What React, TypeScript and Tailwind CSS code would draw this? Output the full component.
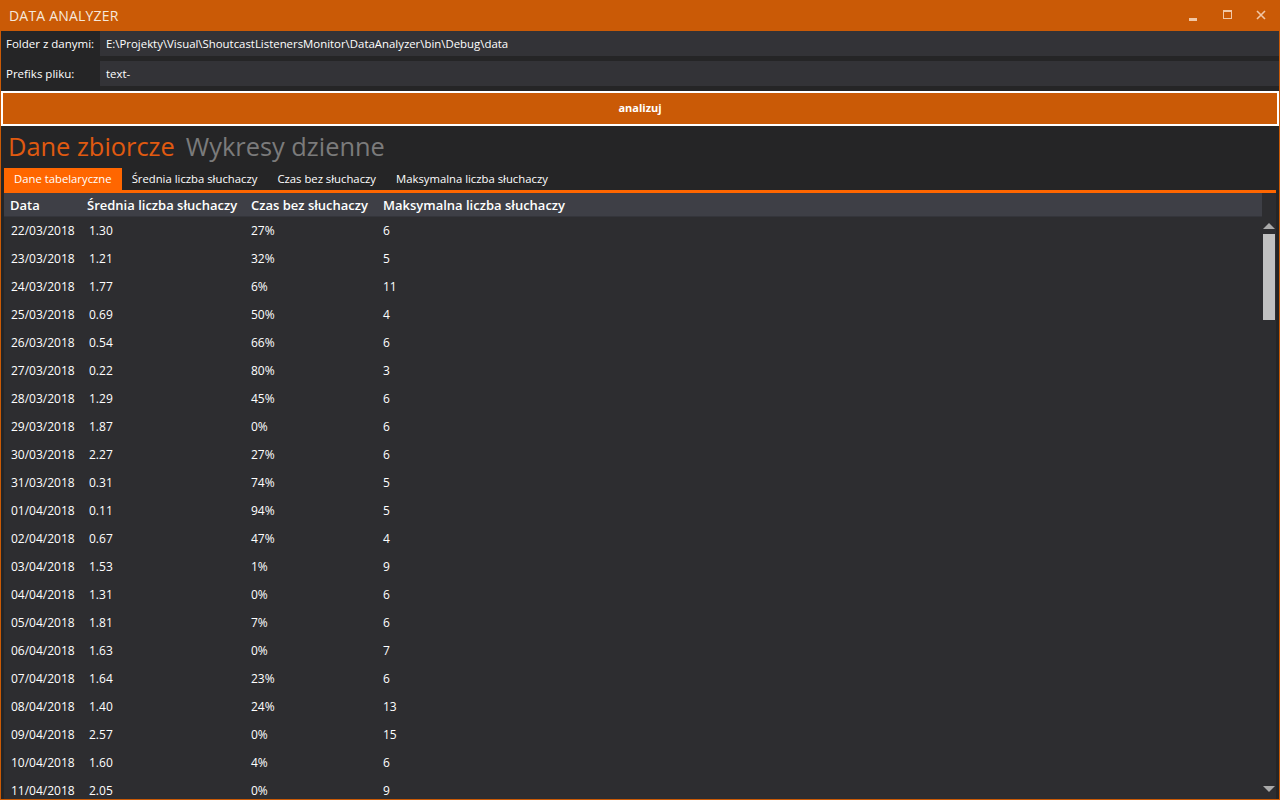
import React from "react";

const rows: [string, string, string, string][] = [
  ["22/03/2018", "1.30", "27%", "6"],
  ["23/03/2018", "1.21", "32%", "5"],
  ["24/03/2018", "1.77", "6%", "11"],
  ["25/03/2018", "0.69", "50%", "4"],
  ["26/03/2018", "0.54", "66%", "6"],
  ["27/03/2018", "0.22", "80%", "3"],
  ["28/03/2018", "1.29", "45%", "6"],
  ["29/03/2018", "1.87", "0%", "6"],
  ["30/03/2018", "2.27", "27%", "6"],
  ["31/03/2018", "0.31", "74%", "5"],
  ["01/04/2018", "0.11", "94%", "5"],
  ["02/04/2018", "0.67", "47%", "4"],
  ["03/04/2018", "1.53", "1%", "9"],
  ["04/04/2018", "1.31", "0%", "6"],
  ["05/04/2018", "1.81", "7%", "6"],
  ["06/04/2018", "1.63", "0%", "7"],
  ["07/04/2018", "1.64", "23%", "6"],
  ["08/04/2018", "1.40", "24%", "13"],
  ["09/04/2018", "2.57", "0%", "15"],
  ["10/04/2018", "1.60", "4%", "6"],
  ["11/04/2018", "2.05", "0%", "9"],
];

const tabs = ["Dane tabelaryczne", "Średnia liczba słuchaczy", "Czas bez słuchaczy", "Maksymalna liczba słuchaczy"];

function TitleBar() {
  return (
    <div className="h-[31px] shrink-0 bg-[#ca5a06] flex items-center pl-[8px] text-[#f6e8dc]">
      <span className="text-[14px] tracking-[0.2px]">DATA ANALYZER</span>
      <div className="ml-auto flex items-center h-full text-[#f1c7a6]">
        {/* minimize */}
        <div className="w-[34px] h-full flex items-center justify-center">
          <div className="w-[8px] h-[3px] bg-[#f1c7a6] mt-[8px]" />
        </div>
        {/* maximize */}
        <div className="w-[34px] h-full flex items-center justify-center">
          <div className="w-[9px] h-[9px] border border-[#f1c7a6] border-t-[2px] mb-[2px]" />
        </div>
        {/* close */}
        <div className="w-[34px] h-full flex items-center justify-center mr-[1px]">
          <svg width="10" height="10" viewBox="0 0 10 10" className="mb-[2px]">
            <path d="M1 1L9 9M9 1L1 9" stroke="#f1c7a6" strokeWidth="1.6" />
          </svg>
        </div>
      </div>
    </div>
  );
}

function Field({ label, value }: { label: string; value: string }) {
  return (
    <div className="h-[25px] flex">
      <div className="w-[99px] pl-[5px] flex items-center text-[11.5px] text-white">{label}</div>
      <div className="flex-1 bg-[#333337] flex items-center pl-[6px] text-[11.4px] text-white">{value}</div>
    </div>
  );
}

export default function App() {
  return (
    <div
      className="w-[1280px] h-[800px] flex flex-col bg-[#252526] border-x border-b border-[#ca5a06] overflow-hidden"
      style={{ fontFamily: '"Open Sans", "Noto Sans", sans-serif' }}
    >
      <TitleBar />
      <div className="flex flex-col gap-[5px]">
        <Field label="Folder z danymi:" value="E:\Projekty\Visual\ShoutcastListenersMonitor\DataAnalyzer\bin\Debug\data" />
        <Field label="Prefiks pliku:" value="text-" />
        <div className="h-[35px] border-2 border-white bg-[#ca5a06] flex items-center justify-center text-[11px] font-bold text-white">
          analizuj
        </div>
      </div>

      <div className="h-[42px] flex items-center pl-[7px] gap-[11px] text-[25.4px] leading-none">
        <span className="text-[#e05a10]">Dane zbiorcze</span>
        <span className="text-[#7b7b7b]">Wykresy dzienne</span>
      </div>

      <div className="flex-1 flex flex-col mx-[3px] min-h-0">
        <div className="h-[22px] flex shrink-0">
          {tabs.map((t, i) => (
            <div
              key={t}
              className={
                i === 0
                  ? "px-[10px] flex items-center text-[11.3px] text-white bg-[#ff6600]"
                  : "px-[10px] flex items-center text-[11.3px] text-white"
              }
            >
              {t}
            </div>
          ))}
        </div>
        <div className="h-[3px] bg-[#ff6600] shrink-0" />
        <div className="flex-1 flex bg-[#2d2d30] min-h-0 overflow-hidden">
          <div className="flex-1 flex flex-col">
            <div className="h-[24px] shrink-0 flex items-center pt-[3px] bg-[#3e3f46] border-b border-[#34353b] text-[13px] font-semibold text-white">
              <div className="w-[83px] pl-[6px]">Data</div>
              <div className="w-[164px]">Średnia liczba słuchaczy</div>
              <div className="w-[132px]">Czas bez słuchaczy</div>
              <div className="flex-1">Maksymalna liczba słuchaczy</div>
            </div>
            {rows.map((r) => (
              <div key={r[0]} className="h-[28px] shrink-0 flex items-center text-[12px] text-white">
                <div className="w-[85px] pl-[7px]">{r[0]}</div>
                <div className="w-[162px]">{r[1]}</div>
                <div className="w-[132px]">{r[2]}</div>
                <div className="flex-1">{r[3]}</div>
              </div>
            ))}
          </div>
          <div className="w-[14px] flex flex-col items-center pt-[30px] pb-[7px]">
            <svg width="12" height="6" viewBox="0 0 12 6">
              <path d="M6 0L12 6H0Z" fill="#a9a9a9" />
            </svg>
            <div className="w-[12px] h-[86px] bg-[#c1c1c1] mt-[5px]" />
            <div className="flex-1" />
            <svg width="12" height="6" viewBox="0 0 12 6">
              <path d="M0 0H12L6 6Z" fill="#a9a9a9" />
            </svg>
          </div>
        </div>
      </div>
    </div>
  );
}
